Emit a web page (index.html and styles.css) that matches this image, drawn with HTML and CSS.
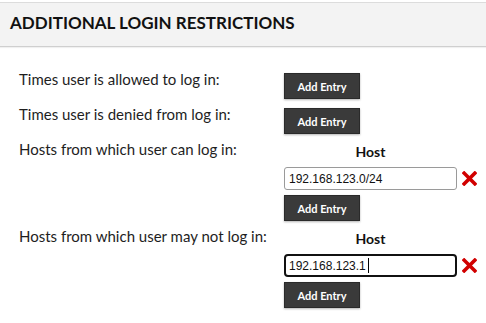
FILE: index.html
```html
<!DOCTYPE html>
<html lang="en">
<head>
    <meta charset="UTF-8">
    <meta name="viewport" content="width=device-width, initial-scale=1.0">
    <title>Login Restrictions</title>
    <link rel="stylesheet" href="styles.css">
</head>
<body>
    <div class="section-header">Additional Login Restrictions</div>
    <div class="section-body">
        <div class="row">
            <div class="label">Times user is allowed to log in:</div>
            <div class="value">
                <button type="button" class="btn">Add Entry</button>
            </div>
        </div>
        <div class="row">
            <div class="label">Times user is denied from log in:</div>
            <div class="value">
                <button type="button" class="btn">Add Entry</button>
            </div>
        </div>
        <div class="row">
            <div class="label">Hosts from which user can log in:</div>
            <div class="value">
                <div class="col-title">Host</div>
                <div class="entry">
                    <input type="text" class="host-input" value="192.168.123.0/24">
                    <svg class="remove" width="15" height="15" viewBox="0 0 15 15">
                        <path d="M2.2 2.2 L12.8 12.8 M12.8 2.2 L2.2 12.8" stroke="#d10000" stroke-width="3.6" stroke-linecap="square"/>
                    </svg>
                </div>
                <button type="button" class="btn">Add Entry</button>
            </div>
        </div>
        <div class="row">
            <div class="label">Hosts from which user may not log in:</div>
            <div class="value">
                <div class="col-title">Host</div>
                <div class="entry">
                    <input type="text" class="host-input focused" value="192.168.123.1">
                    <svg class="remove" width="15" height="15" viewBox="0 0 15 15">
                        <path d="M2.2 2.2 L12.8 12.8 M12.8 2.2 L2.2 12.8" stroke="#d10000" stroke-width="3.6" stroke-linecap="square"/>
                    </svg>
                </div>
                <button type="button" class="btn">Add Entry</button>
            </div>
        </div>
    </div>
</body>
</html>
```

FILE: styles.css
```css
body {
    margin: 0;
    padding: 0;
    background-color: #fff;
    font-family: Lato, "Open Sans", sans-serif;
    color: #1e1e1e;
}
.section-header {
    margin-top: 2px;
    padding: 10px 10px 13px;
    background-color: #f3f3f3;
    border-top: 1px solid #dcdcdc;
    border-bottom: 1px solid #cfcfcf;
    box-shadow: 0 1px 1px rgba(0, 0, 0, 0.06);
    font-size: 17px;
    line-height: 20px;
    font-weight: bold;
    text-transform: uppercase;
    color: #111;
}
.section-body {
    padding: 23px 0 0 19px;
}
.row {
    display: grid;
    grid-template-columns: 265px auto;
    align-items: start;
    margin-bottom: 6px;
}
.label {
    font-size: 15px;
    line-height: 18px;
}
.value {
    display: flex;
    flex-direction: column;
    align-items: flex-start;
}
.btn {
    margin-top: 3px;
    width: 76px;
    height: 26px;
    padding: 0;
    background-color: #3a3a3a;
    border: 1px solid #2a2a2a;
    box-shadow: 0 1px 2px rgba(0, 0, 0, 0.3);
    color: #fff;
    font-family: Lato, sans-serif;
    font-size: 11px;
    font-weight: bold;
}
.col-title {
    width: 173px;
    padding-top: 3px;
    text-align: center;
    font-size: 14px;
    line-height: 17px;
    font-weight: bold;
    color: #111;
}
.entry {
    display: flex;
    align-items: center;
    gap: 5px;
    margin-top: 7px;
}
.entry + .btn {
    margin-top: 5px;
}
.host-input {
    width: 173px;
    height: 23px;
    box-sizing: border-box;
    margin: 0;
    padding: 0 4px;
    border: 1px solid #9a9a9a;
    border-radius: 3px;
    font-family: "Liberation Sans", Arial, sans-serif;
    font-size: 12px;
    color: #111;
    outline: none;
}
.host-input.focused {
    border: 2px solid #111;
    border-radius: 4px;
    padding: 0 3px;
    /* drawn caret after the last character */
    background-image: linear-gradient(#000, #000);
    background-size: 1px 15px;
    background-position: 82px center;
    background-repeat: no-repeat;
}
.remove {
    display: block;
}
```
